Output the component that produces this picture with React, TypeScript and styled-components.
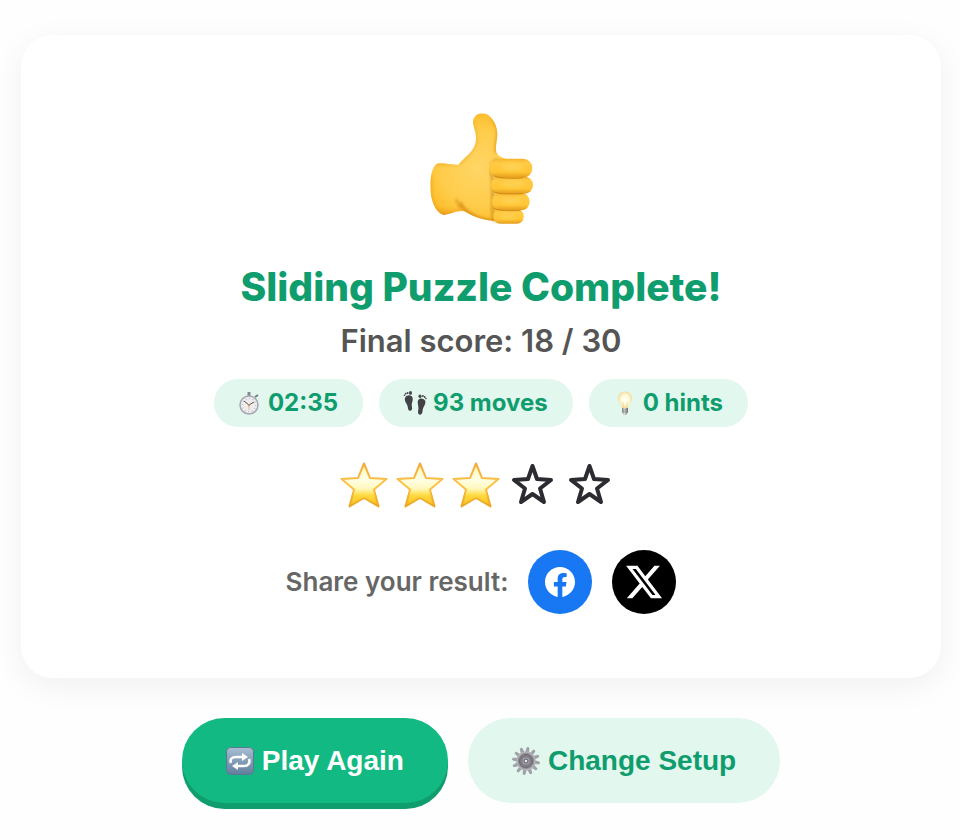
import React from "react";
import styled, { createGlobalStyle } from "styled-components";

const GlobalStyle = createGlobalStyle`
  *, *::before, *::after { box-sizing: border-box; }
  body {
    margin: 0;
    background: #fefefe;
    font-family: Inter, "Liberation Sans", sans-serif;
    -webkit-font-smoothing: antialiased;
  }
`;

const Page = styled.main`
  display: flex;
  flex-direction: column;
  gap: 40px;
  padding: 35px 19px 30px 21px;
`;

const Card = styled.section`
  display: flex;
  flex-direction: column;
  align-items: center;
  padding: 77px 32px 64px;
  border-radius: 32px;
  background: #fff;
  box-shadow: 0 8px 32px rgba(0, 0, 0, 0.06);
`;

const Title = styled.h1`
  margin: 39px 0 0;
  font-size: 39px;
  line-height: 48px;
  font-weight: 800;
  color: #0f9d6e;
`;

const Score = styled.p`
  margin: 10px 0 0;
  font-size: 31px;
  line-height: 40px;
  font-weight: 600;
  color: #555;
`;

const Stats = styled.ul`
  display: flex;
  flex-wrap: wrap;
  justify-content: center;
  gap: 16px;
  margin: 18px 0 0;
  padding: 0;
  list-style: none;
`;

const Stat = styled.li`
  display: flex;
  align-items: center;
  gap: 6px;
  padding: 0 25px 0 24px;
  border-radius: 24px;
  background: #e2f7ee;
  color: #0f9d6e;
  font-size: 24px;
  line-height: 48px;
  font-weight: 700;
`;

const Stars = styled.div`
  display: flex;
  gap: 8px;
  margin-top: 34px;
  padding-right: 8px;
`;

const Share = styled.div`
  display: flex;
  align-items: center;
  gap: 20px;
  margin-top: 41px;
  color: #666;
  font-size: 26px;
  line-height: 32px;
  font-weight: 600;
`;

const ShareLink = styled.a<{ $color: string }>`
  display: flex;
  align-items: center;
  justify-content: center;
  width: 64px;
  height: 64px;
  border-radius: 50%;
  background: ${(p) => p.$color};
  color: #fff;
`;

const Actions = styled.div`
  display: flex;
  flex-wrap: wrap;
  justify-content: center;
  gap: 20px;
`;

const Button = styled.button<{ $primary?: boolean }>`
  display: flex;
  align-items: center;
  gap: 8px;
  padding: 0 44px;
  border: 0;
  border-radius: 43px;
  background: ${(p) => (p.$primary ? "#12b982" : "#e2f7ee")};
  color: ${(p) => (p.$primary ? "#fff" : "#0f9d6e")};
  box-shadow: ${(p) => (p.$primary ? "0 6px 0 #0f9d6e" : "none")};
  font-family: "Liberation Sans", Arial, sans-serif;
  font-size: 28px;
  line-height: 85px;
  font-weight: 700;
  cursor: pointer;
`;

const ThumbsUp = () => (
  <svg width="112" height="112" viewBox="45 36 336 336" role="img" aria-label="Thumbs up">
    <defs>
      <radialGradient id="hand" gradientUnits="userSpaceOnUse" cx="205" cy="205" r="185">
        <stop offset="0" stopColor="#ffd565" />
        <stop offset="0.6" stopColor="#ffcd4c" />
        <stop offset="0.85" stopColor="#fdc132" />
        <stop offset="1" stopColor="#f0a61a" />
      </radialGradient>
      <linearGradient id="finger" x1="0" y1="0" x2="0" y2="1">
        <stop offset="0" stopColor="#f3b32a" />
        <stop offset="0.22" stopColor="#ffcb45" />
        <stop offset="0.7" stopColor="#ffc636" />
        <stop offset="1" stopColor="#e59d1c" />
      </linearGradient>
      <linearGradient id="wrist" x1="0" y1="0" x2="0" y2="1">
        <stop offset="0" stopColor="#e69c16" stopOpacity="0.5" />
        <stop offset="0.12" stopColor="#ffca3c" stopOpacity="0" />
        <stop offset="0.8" stopColor="#ffc02c" stopOpacity="0" />
        <stop offset="1" stopColor="#e09018" stopOpacity="0.8" />
      </linearGradient>
      <filter id="soft" x="-30%" y="-30%" width="160%" height="160%">
        <feGaussianBlur stdDeviation="5" />
      </filter>
      <clipPath id="handClip">
        <path d="M86 190C104 188 125 195 145 194C158 177 177 166 188 148C203 124 199 105 191 79C184 55 198 40 217 40C241 40 262 73 262 101C262 122 254 146 260 159C267 171 281 173 290 178V360C246 369 203 357 167 336C148 327 123 343 101 345C75 337 61 300 61 259C61 221 69 194 86 190Z" />
      </clipPath>
    </defs>
    <g clipPath="url(#handClip)">
      <path fill="url(#hand)" d="M45 30H300V375H45Z" />
      <path fill="url(#wrist)" d="M60 189H142C138 240 140 290 160 345H60Z" />
      <g fill="none" filter="url(#soft)">
        <path d="M188 60Q204 100 197 133Q184 164 145 194" stroke="#f0b22c" strokeWidth="5" />
        <path d="M246 52Q268 86 262 110T258 160" stroke="#e79a10" strokeWidth="7" />
        <path d="M150 308Q160 330 184 343Q218 364 260 362" stroke="#d98c12" strokeWidth="9" />
        <path d="M62 225V300Q72 330 96 346" stroke="#eea51c" strokeWidth="7" />
      </g>
      <path d="M138 296Q143 314 156 326" stroke="#d8921b" strokeWidth="5" fill="none" filter="url(#soft)" />
    </g>
    <path d="M262 178Q234 196 248 236V335Q249 358 256 365" fill="none" stroke="#b8750f" strokeWidth="9" opacity=".55" filter="url(#soft)" />
    <g fill="url(#finger)">
      <rect x="250" y="327" width="91" height="44" rx="20" />
      <rect x="246" y="279" width="113" height="52" rx="25" />
      <rect x="243" y="230" width="126" height="51" rx="25" />
      <rect x="238" y="176" width="129" height="57" rx="28" />
    </g>
    <g fill="none" stroke="#bd7210" strokeWidth="3" strokeLinecap="round" opacity=".6">
      <path d="M254 228Q262 234 301 235T340 231" />
      <path d="M252 276Q262 282 302 282T340 280" />
      <path d="M252 325Q264 332 300 332T331 330" />
    </g>
    <g fill="#ffd65c" opacity=".6" filter="url(#soft)">
      <ellipse cx="308" cy="201" rx="34" ry="12" />
      <ellipse cx="309" cy="253" rx="33" ry="10" />
      <ellipse cx="304" cy="303" rx="30" ry="10" />
      <ellipse cx="293" cy="350" rx="24" ry="8" />
    </g>
  </svg>
);

const Stopwatch = () => (
  <svg width="24" height="26" viewBox="0 0 24 26" aria-hidden="true">
    <path d="M9.500 2h3v4h-3z" fill="#858891" />
    <path d="M17 7l3-2" stroke="#767982" strokeWidth="2" />
    <circle cx="11" cy="15" r="9" fill="#edecef" stroke="#a9a8b0" strokeWidth="1.500" />
    <circle cx="11" cy="15" r="6.700" fill="none" stroke="#aaa8b0" strokeWidth="1.300" strokeDasharray="0.700 2.800" />
    <path d="M11 15L6 11M11 15l5-3" stroke="#555" strokeWidth="1" />
    <path d="M11 15v5" stroke="#f0a24f" strokeWidth="0.700" />
    <circle cx="11" cy="15" r="1.200" fill="#c9905c" />
  </svg>
);

const Footprints = () => (
  <svg width="24" height="26" viewBox="0 0 24 26" fill="#434246" aria-hidden="true">
    <path d="M2 8C3 5 8 4 9.500 7.500C10.500 11 8 13 9 17C10 21.500 5.500 22 5 18.500C5 14 1 12 2 8Z" />
    <circle cx="1.500" cy="5.200" r=".8" /><circle cx="2.700" cy="3.700" r=".9" />
    <circle cx="4.600" cy="2.900" r="1" /><ellipse cx="7.500" cy="2.900" rx="1.500" ry="1.900" />
    <path d="M15 10.500C16.500 7.500 21 8 22.300 11C23 15 19.500 17 19.500 21.500C19 26 14.500 25.500 15 21.500C16.500 17 14 14 15 10.500Z" />
    <ellipse cx="17" cy="6.300" rx="1.500" ry="1.800" /><circle cx="19.900" cy="6" r="1" />
    <circle cx="21.700" cy="7" r=".9" /><circle cx="22.900" cy="8.500" r=".8" />
  </svg>
);

const Bulb = () => (
  <svg width="24" height="26" viewBox="0 0 24 26" aria-hidden="true">
    <defs>
      <radialGradient id="bulb"><stop stopColor="#fffffa" /><stop offset=".6" stopColor="#fff9d8" /><stop offset="1" stopColor="#f3dc9c" /></radialGradient>
      <linearGradient id="screw"><stop stopColor="#777" /><stop offset=".4" stopColor="#ddd" /><stop offset="1" stopColor="#666" /></linearGradient>
    </defs>
    <path d="M12 1.500C7.500 1.500 5 5 5 8.500C5 12.500 8.500 14.500 9 18H15C15.500 14.500 19 12.500 19 8.500C19 5 16.500 1.500 12 1.500Z" fill="url(#bulb)" />
    <path d="M10.500 18L10 12M13.500 18L14 12" fill="none" stroke="#efd48c" strokeWidth=".7" />
    <path d="M9 18h6v4l-2 3h-2l-2-3z" fill="url(#screw)" />
    <path d="M9 20h6M9 22h6" stroke="#888" strokeWidth=".7" />
  </svg>
);

const FilledStar = () => (
  <svg width="48" height="48" viewBox="0 0 48 48" aria-hidden="true">
    <defs>
      <linearGradient id="star" x1="0" y1="0" x2="0" y2="1">
        <stop offset="0" stopColor="#fff5b4" /><stop offset=".38" stopColor="#fffee4" />
        <stop offset=".58" stopColor="#fff9bd" /><stop offset=".75" stopColor="#ffd93c" /><stop offset="1" stopColor="#f9b91d" />
      </linearGradient>
      <linearGradient id="starEdge" x1="0" y1="0" x2="0" y2="1">
        <stop stopColor="#f2a83c" /><stop offset=".5" stopColor="#fbc548" /><stop offset="1" stopColor="#eca51f" />
      </linearGradient>
    </defs>
    <path d="M24 2.500L30 17L46.500 18L34 28.500L38.500 45.500L24 37L9.500 45.500L14 28.500L1.500 18L18 17Z" fill="url(#star)" stroke="url(#starEdge)" strokeWidth="2" strokeLinejoin="round" />
  </svg>
);

const EmptyStar = () => (
  <svg width="49" height="48" viewBox="0 0 49 48" aria-hidden="true">
    <path d="M24.500 5L29 18L43 19L32 27.500L36 41L24.500 33L13 41L17 27.500L6 19L20 18Z" fill="none" stroke="#2c2b31" strokeWidth="4" strokeLinejoin="round" />
  </svg>
);

const FacebookIcon = () => (
  <svg width="30" height="30" viewBox="0 0 24 24" fill="currentColor" aria-hidden="true">
    <path d="M24 12.073c0-6.627-5.373-12-12-12s-12 5.373-12 12c0 5.990 4.388 10.954 10.125 11.854v-8.385H7.078v-3.470h3.047V9.430c0-3.007 1.792-4.669 4.533-4.669 1.312 0 2.686.235 2.686.235v2.953H15.830c-1.491 0-1.956.925-1.956 1.874v2.250h3.328l-.532 3.470h-2.796v8.385C19.612 23.027 24 18.062 24 12.073z" />
  </svg>
);

const XIcon = () => (
  <svg width="40" height="40" viewBox="0 0 24 24" fill="currentColor" aria-hidden="true">
    <path d="M18.244 2.250h3.308l-7.227 8.260 8.502 11.240H16.170l-5.214-6.817L4.990 21.750H1.680l7.730-8.835L1.254 2.250H8.080l4.713 6.231zm-1.161 17.520h1.833L7.084 4.126H5.117z" />
  </svg>
);

const RepeatIcon = () => (
  <svg width="28" height="28" viewBox="0 0 28 28" aria-hidden="true">
    <defs><linearGradient id="tile" x1="0" y1="0" x2="0" y2="1"><stop stopColor="#a7bed2" /><stop offset="1" stopColor="#617e9d" /></linearGradient></defs>
    <rect x=".5" y=".5" width="27" height="27" rx="4" fill="url(#tile)" stroke="#587994" />
    <g fill="none" stroke="#fff" strokeWidth="2.500">
      <path d="M5 16C3.500 12 6 10 10 10H17" />
      <path d="M23 12C24.500 16 22 19 18 19H11" />
    </g>
    <path d="M16 6l6 4-6 4zM12 15l-6 4 6 4z" fill="#fff" />
  </svg>
);

const GearIcon = () => (
  <svg width="28" height="28" viewBox="0 0 28 28" aria-hidden="true">
    <g fill="#a3a2aa" stroke="#85848d" strokeWidth=".5">
      {Array.from({ length: 12 }, (_, i) => (
        <path key={i} d="M12.500 5l.7-4.500h1.800L15.500 5z" transform={`rotate(${i * 30 + 8} 14 14)`} />
      ))}
    </g>
    <circle cx="14" cy="14" r="9" fill="#929198" stroke="#b5b4b9" strokeWidth="1.500" />
    <circle cx="14" cy="14" r="6.500" fill="#807f87" stroke="#6b6972" />
    <circle cx="14" cy="14" r="3.500" fill="#aaa9af" />
    <circle cx="14" cy="14" r="2" fill="#e7e7e9" stroke="#56545c" />
  </svg>
);

export default function App() {
  return (
    <>
      <GlobalStyle />
      <Page>
        <Card>
          <ThumbsUp />
          <Title>Sliding Puzzle Complete!</Title>
          <Score>Final score: 18 / 30</Score>
          <Stats>
            <Stat><Stopwatch />02:35</Stat>
            <Stat><Footprints />93 moves</Stat>
            <Stat><Bulb />0 hints</Stat>
          </Stats>
          <Stars role="img" aria-label="3 out of 5 stars">
            <FilledStar /><FilledStar /><FilledStar /><EmptyStar /><EmptyStar />
          </Stars>
          <Share>
            <span>Share your result:</span>
            <ShareLink $color="#1877f2" href="#facebook" aria-label="Share on Facebook"><FacebookIcon /></ShareLink>
            <ShareLink $color="#000" href="#x" aria-label="Share on X"><XIcon /></ShareLink>
          </Share>
        </Card>
        <Actions>
          <Button type="button" $primary><RepeatIcon />Play Again</Button>
          <Button type="button"><GearIcon />Change Setup</Button>
        </Actions>
      </Page>
    </>
  );
}
